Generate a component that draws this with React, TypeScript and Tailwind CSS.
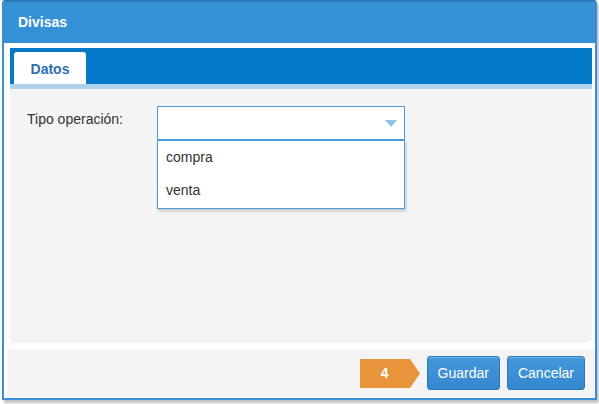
import { useState } from 'react';

const font = { fontFamily: '"Liberation Sans", Arial, sans-serif' };

function Badge({ n }: { n: number }) {
	return (
		<div className="relative flex h-[29px] w-[60px] items-center">
			<svg className="absolute inset-0" width="60" height="29" viewBox="0 0 60 29">
				<polygon points="0,0 50,0 60,14.5 50,29 0,29" fill="#e8943a" />
			</svg>
			<span className="relative w-[50px] text-center text-[14px] font-bold text-white">{n}</span>
		</div>
	);
}

function Button({ children }: { children: string }) {
	return (
		<button className="h-[34px] rounded-[3px] border border-[#2b78b8] bg-gradient-to-b from-[#4498dc] to-[#3588cf] px-[10px] text-[14px] text-white shadow-[inset_0_1px_0_rgba(255,255,255,0.25)]">
			{children}
		</button>
	);
}

export default function App() {
	const [open] = useState(true);
	const options = ['compra', 'venta'];

	return (
		<div className="h-[404px] w-[599px] bg-white" style={font}>
			<div className="ml-[2px] flex h-[400px] w-[595px] flex-col rounded-t-[3px] border-2 border-t-[#2c78b8] border-x-[#3a8ed6] border-b-[#3a8ed6] bg-white shadow-[2px_3px_3px_rgba(0,0,0,0.25)]">
				{/* title */}
				<div className="flex h-[41px] shrink-0 items-center bg-[#3591d6] pl-[14px] text-[14px] font-bold text-white">
					Divisas
				</div>

				{/* tab panel */}
				<div className="mt-[5px] ml-[6px] mr-[3px] flex h-[295px] flex-col">
					<div className="flex h-[36px] shrink-0 items-end bg-[#0479c8] pl-[4px]">
						<div className="flex h-[32px] w-[72px] items-center justify-center rounded-t-[3px] bg-white pt-[2px] text-[14px] font-bold text-[#2f6fae]">
							Datos
						</div>
					</div>
					<div className="h-[5px] shrink-0 bg-[#aed2ee]" />
					<div className="flex-1 rounded-b-[5px] bg-[#f4f4f4] pt-[17px] pl-[17px]">
						<div className="flex items-start">
							<label className="w-[130px] pt-[3px] text-[14px] text-[#333]">Tipo operación:</label>
							<div className="relative">
								<div className="flex h-[34px] w-[248px] items-center justify-end border border-[#4c9de0] bg-white pr-[7px]">
									<svg width="12" height="7" viewBox="0 0 12 7">
										<polygon points="0,0 12,0 6,7" fill="#8fc1ea" />
									</svg>
								</div>
								{open && (
									<ul className="absolute top-[34px] left-0 flex h-[69px] w-[248px] flex-col justify-center border border-[#4c9de0] bg-white pb-[2px] shadow-[1px_2px_3px_rgba(0,0,0,0.2)]">
										{options.map((o) => (
											<li key={o} className="h-[33px] pl-[8px] leading-[33px] text-[14px] text-[#333]">
												{o}
											</li>
										))}
									</ul>
								)}
							</div>
						</div>
					</div>
				</div>

				{/* footer */}
				<div className="mt-[6px] ml-[3px] mr-[1px] flex h-[48px] items-center justify-end gap-[7px] bg-[#f4f4f4] pr-[9px]">
					<Badge n={4} />
					<Button>Guardar</Button>
					<Button>Cancelar</Button>
				</div>
			</div>
		</div>
	);
}
